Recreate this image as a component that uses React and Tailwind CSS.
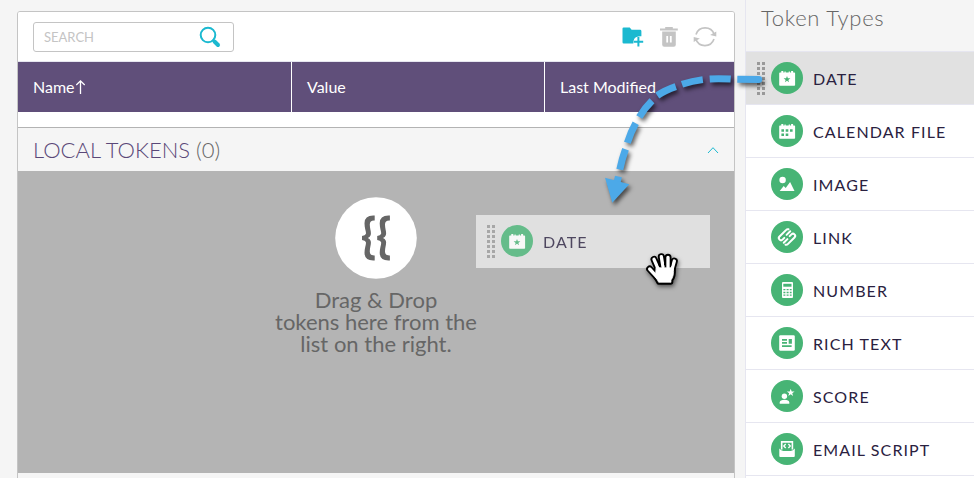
import React from "react";

const STAR = "M0-4.2L1.1-1.3L4.2-1.3L1.7.6L2.6 3.6L0 1.8L-2.6 3.6L-1.7.6L-4.2-1.3L-1.1-1.3Z";

function Calendar({ children }) {
  return (
    <>
      <path
        fill="#fff"
        d="M9 10.5h1.3V9h2v1.5h1.2V9.6h1.2v.9h3V9.6h1.2v.9h1.2V9h2v1.5h1.2a.8.8 0 0 1 .8.8v11.6a.8.8 0 0 1-.8.8H9a.8.8 0 0 1-.8-.8V11.3a.8.8 0 0 1 .8-.8z"
      />
      {children}
    </>
  );
}

const GLYPHS = {
  date: (
    <Calendar>
      <path d={STAR} transform="translate(16 17.4) scale(.8)" fill="#47b475" />
    </Calendar>
  ),
  calendar: (
    <Calendar>
      <g fill="#47b475">
        <path d="M10.4 14.2h2.6v2.6h-2.6zM14.7 14.2h2.6v2.6h-2.6zM19 14.2h2.6v2.6h-2.6zM10.4 18.4h2.6v2.6h-2.6zM14.7 18.4h2.6v2.6h-2.6z" />
      </g>
    </Calendar>
  ),
  image: (
    <g fill="#fff">
      <circle cx="11.6" cy="12" r="3.2" />
      <path d="M8.7 22.9l4-5 2 2 4.4-5.8 4.4 8.8z" />
    </g>
  ),
  link: (
    <g
      transform="rotate(-45 16 16)"
      fill="none"
      stroke="#fff"
      strokeWidth="2"
      strokeLinecap="round"
      strokeLinejoin="round"
    >
      <path d="M13.5 14.7H11A2.1 2.1 0 0 1 11 10.4H20.5A2.1 2.1 0 0 1 22.5 11.6" />
      <path d="M17.2 14.2H22.4" />
      <path d="M18.5 17.3H21A2.1 2.1 0 0 1 21 21.6H11.5A2.1 2.1 0 0 1 9.5 20.4" />
      <path d="M14.8 17.8H9.6" />
    </g>
  ),
  number: (
    <>
      <rect x="11" y="8" width="11" height="16" rx="1" fill="#fff" />
      <path fill="#47b475" d="M12.3 9.8h8.2v2.9h-8.2z" />
      <path
        stroke="#47b475"
        strokeWidth="1.3"
        strokeDasharray="2 1.2"
        d="M12.4 15.7h8.2M12.4 18.5h8.2M12.4 21.2h8.2"
      />
    </>
  ),
  rich: (
    <>
      <rect x="8.2" y="8.2" width="15.6" height="15.6" rx="1.2" fill="#fff" />
      <path fill="#47b475" d="M11 12h5v1.8h-5zM11 15h5v1.8h-5zM17.7 12h3.2v4.8h-3.2zM11 18.2h9.6v1.8H11z" />
    </>
  ),
  score: (
    <g fill="#fff">
      <circle cx="13.4" cy="16.3" r="2.7" />
      <path d="M8.7 23.7v-1.2c0-2 2-2.8 4.8-2.8s4.8.8 4.8 2.8v1.2z" />
      <path d={STAR} transform="translate(19.7 12.6) scale(.92)" />
    </g>
  ),
  email: (
    <>
      <path d="M10.7 16.6V8.9h10.7v7.7" fill="none" stroke="#fff" strokeWidth="1.6" />
      <path d="M14.7 11l-1.9 2 1.9 2M17.4 11l1.9 2-1.9 2" fill="none" stroke="#fff" strokeWidth="1.3" />
      <path fill="#fff" d="M8.3 15.6q2 2 4 2.5h7.5q2-.5 4-2.5V23a1 1 0 0 1-1 1H9.3a1 1 0 0 1-1-1z" />
    </>
  ),
};

const TOKENS = [
  ["date", "DATE"],
  ["calendar", "CALENDAR FILE"],
  ["image", "IMAGE"],
  ["link", "LINK"],
  ["number", "NUMBER"],
  ["rich", "RICH TEXT"],
  ["score", "SCORE"],
  ["email", "EMAIL SCRIPT"],
];

function TokenLabel({ glyph, label, grip }) {
  return (
    <div className="flex h-full items-center pl-[11px]">
      <div className="h-[33px] w-[14px]">
        {grip && (
          <svg width="8" height="33" fill="#999">
            {[0, 5, 10, 15, 20, 25, 30].map((y) => (
              <path key={y} d={`M0 ${y}h3v3h-3zM5 ${y}h3v3h-3z`} />
            ))}
          </svg>
        )}
      </div>
      <svg width="32" height="32" viewBox="0 0 32 32" className="shrink-0">
        <circle cx="16" cy="16" r="16" fill="#47b475" />
        {GLYPHS[glyph]}
      </svg>
      <span className="ml-[10px] whitespace-nowrap pt-[2px] text-[16px] leading-5 tracking-[1.1px] text-[#2a2140]">
        {label}
      </span>
    </div>
  );
}

function Toolbar() {
  return (
    <div className="flex h-[50px] items-center justify-between border-b border-[#e6e6f0] bg-white pl-[15px] pr-[17px]">
      <div className="flex h-[30px] w-[201px] items-center justify-between rounded-[3px] border border-[#c4c4c4] pl-[10px] pr-[12px]">
        <span className="pt-[2px] text-[13px] text-[#c4c4c4]">SEARCH</span>
        <svg width="22" height="22" viewBox="0 0 22 22" fill="none" stroke="#1bb9d0">
          <circle cx="9" cy="9" r="7.3" strokeWidth="2" />
          <path d="M13.6 13.6l2 2" strokeWidth="2.4" />
          <path d="M15.5 15.5l3.5 3.5" strokeWidth="4" strokeLinecap="round" />
        </svg>
      </div>
      <div className="flex items-center gap-[14px]">
        <svg width="22" height="22" viewBox="0 0 22 22">
          <path fill="#1bb9d0" d="M.5 2.6q0-1.2 1.2-1.2h6.1l1.8 2.4h8.4q1.4 0 1.4 1.4v5q-5.5-.3-7.2 2.7-1 1.7-.8 4.5H1.7Q.5 17.4.5 16.2z" />
          <path stroke="#1bb9d0" strokeWidth="2" d="M16.4 11v9.4M11.8 15.7h9.4" />
        </svg>
        <svg width="20" height="22" viewBox="0 0 20 22" className="ml-px">
          <path fill="#c4c4c4" d="M6.2 1h7.6v1.4h5v2H1v-2h5.2z" />
          <path fill="#c4c4c4" d="M3.2 5.6h13.6v13.2q0 2-2 2H5.2q-2 0-2-2z" />
          <path stroke="#fff" strokeWidth="1.8" d="M8.2 10v6.4M11.8 10v6.4" />
        </svg>
        <svg width="24" height="24" viewBox="0 0 24 24" fill="none" stroke="#c4c4c4" strokeWidth="1.7">
          <path d="M3 9.5A9.6 9.6 0 0 1 21.2 9.5M21 14A9.6 9.6 0 0 1 2.8 14" />
          <path stroke="none" fill="#c4c4c4" d="M23.3 6.5v5l-6.2-1.6zM.7 17v-5l6.2 1.6z" />
        </svg>
      </div>
    </div>
  );
}

function GrabHand() {
  const shape = "M582 178L596 210M604 170L609 200M624 172L624 202M643 183L635 212M569 207L592 232";
  const palm = "M589 203L640 203Q643 228 633 240V247H596Q592 239 586 230Z";
  return (
    <svg
      className="absolute left-[645px] top-[251px] drop-shadow-[1px_2px_2px_rgba(0,0,0,0.55)]"
      width="35"
      height="37"
      viewBox="555 153 105 111"
      strokeLinecap="round"
      strokeLinejoin="round"
    >
      <path d={shape} stroke="#000" strokeWidth="21" />
      <path d={palm} fill="#000" stroke="#000" strokeWidth="14" />
      <path d={shape} stroke="#fff" strokeWidth="10" />
      <path d={palm} fill="#fff" stroke="#fff" strokeWidth="2" />
      <path d="M596 190l3 9M614 186v8M633 189l-1 7" stroke="#000" strokeWidth="4" />
    </svg>
  );
}

function DragArrow() {
  return (
    <svg
      className="absolute left-0 top-0 drop-shadow-[2px_3px_2px_rgba(0,0,0,0.6)]"
      width="974"
      height="478"
      fill="none"
      stroke="#4ca9e8"
      strokeWidth="7"
    >
      <path d="M737.3 79.3L759 79.6" />
      <circle cx="758.8" cy="79.5" r="3.4" fill="#4ca9e8" stroke="none" />
      <path d="M709.7 78.9Q720 78.3 730.7 79.1" />
      <path d="M682 84.3Q692 81 702.8 79.6" />
      <path d="M657.3 95.5Q665 90.3 675.8 86.6" />
      <path d="M639.3 117Q644.6 108 652 100.7" />
      <path d="M627.4 142.8Q630.5 132.5 635.7 123.2" />
      <path d="M619.8 169.5Q622 159 625.5 149.3" />
      <path d="M616.5 185L618.4 176.5" />
      <path d="M605 177.7L629.3 184.3L612.3 202.7Z" fill="#4ca9e8" stroke="none" />
    </svg>
  );
}

const BRACE =
  "M12.7 .3V5.3Q7.6 5 7.8 9.5C7.9 14 9.6 17 8.6 20Q7.8 22.2 5.8 22.7Q7.8 23.2 8.6 25.4C9.6 28.4 7.9 31.4 7.8 35.9Q7.6 40.4 12.7 40.1V45.1Q2.6 45.8 2.5 37.5C2.5 32 4.6 28.5 3.8 26.6Q3.2 25 0 24.6V20.8Q3.2 20.4 3.8 18.8C4.6 16.9 2.5 13.4 2.5 7.9Q2.6 -.4 12.7 .3Z";

export default function App() {
  return (
    <div className="relative flex h-[478px] w-[974px] overflow-hidden bg-[#f5f5f5] font-['Lato',sans-serif]">
      <main className="ml-[17px] mt-[11px] h-[480px] w-[718px] shrink-0 overflow-hidden rounded-t-[3px] border border-[#c4c4c4]">
        <Toolbar />
        <div className="flex h-[50px] items-center bg-[#604f7a] text-[16px] text-white">
          <div className="flex h-full w-[274px] items-center border-r border-white pl-[15px]">
            <span>Name</span>
            <svg width="11" height="16" viewBox="0 0 11 16" fill="none" stroke="#fff" strokeWidth="1.3">
              <path d="M5.5 15V2M1.3 6l4.2-4.2L9.7 6" />
            </svg>
          </div>
          <div className="flex h-full w-[253px] items-center border-r border-white pl-[15px]">Value</div>
          <div className="pl-[15px]">Last Modified</div>
        </div>
        <div className="h-[15px] bg-white" />
        <div className="flex h-[44px] items-center justify-between border-t border-[#b3b3b3] pl-[15px] pr-[15px] text-[22px] font-light">
          <h2 className="text-[#5a4878]">
            LOCAL TOKENS <span className="text-[#666]">(0)</span>
          </h2>
          <svg width="12" height="8" viewBox="0 0 12 8" fill="none" stroke="#1bb9d0" strokeWidth="1">
            <path d="M1 7l5-5.3L11 7" />
          </svg>
        </div>
        <section className="h-[302px] bg-[#b4b4b4] pt-[26px]">
          <div className="flex w-full flex-col items-center">
            <svg width="82" height="82" viewBox="0 0 82 82">
              <circle cx="41" cy="41" r="40.8" fill="#fff" />
              <path d={BRACE} transform="translate(27 18.3)" fill="#666" />
              <path d={BRACE} transform="translate(42.2 18.3)" fill="#666" />
            </svg>
            <p className="mt-[10px] text-center text-[22px] leading-[22px] text-[#666]">
              Drag &amp; Drop
              <br />
              tokens here from the
              <br />
              list on the right.
            </p>
          </div>
        </section>
      </main>
      <aside className="ml-[10px] flex-1 border-l border-[#e6e6f0]">
        <h2 className="h-[51px] pl-[15px] pt-[4px] text-[22px] font-light leading-[27px] tracking-[0.7px] text-[#666]">
          Token Types
        </h2>
        <ul>
          {TOKENS.map(([glyph, label], i) => (
            <li key={label} className={`h-[53px] border-t border-[#e6e6f0] ${i === 0 ? "bg-[#e1e1e1]" : "bg-white"}`}>
              <TokenLabel glyph={glyph} label={label} grip={i === 0} />
            </li>
          ))}
          <li className="h-[53px] border-t border-[#e6e6f0] bg-white" />
        </ul>
      </aside>
      <div className="absolute left-[476px] top-[215px] h-[53px] w-[234px] bg-[#e0e0e0]">
        <div className="h-[52px] opacity-80">
          <TokenLabel glyph="date" label="DATE" grip />
        </div>
      </div>
      <DragArrow />
      <GrabHand />
    </div>
  );
}
